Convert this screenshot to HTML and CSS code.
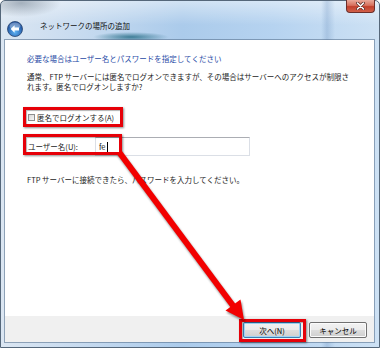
FILE: index.html
```html
<!DOCTYPE html>
<html lang="ja">
<head>
    <meta charset="UTF-8">
    <meta name="viewport" content="width=device-width, initial-scale=1.0">
    <title>ネットワークの場所の追加</title>
    <link rel="stylesheet" href="styles.css">
</head>
<body>
    <div class="window">
        <div class="titlebar">
            <span class="back">
                <svg width="16" height="16" viewBox="0 0 16 16">
                    <defs>
                        <radialGradient id="orb" cx="50%" cy="70%" r="60%">
                            <stop offset="0" stop-color="#5fb4f5"/>
                            <stop offset="1" stop-color="#1c4f9e"/>
                        </radialGradient>
                    </defs>
                    <circle cx="8" cy="8" r="7.5" fill="url(#orb)" stroke="#27446e" stroke-width="0.8"/>
                    <ellipse cx="8" cy="5" rx="5.5" ry="3.5" fill="#fff" opacity="0.35"/>
                    <path d="M3.6 8 L7.6 4.2 L7.6 6.6 L12 6.6 L12 9.4 L7.6 9.4 L7.6 11.8 Z" fill="#fff"/>
                </svg>
            </span>
            <span class="title">ネットワークの場所の追加</span>
            <span class="close">
                <svg width="9" height="8" viewBox="0 0 9 8">
                    <path d="M1.5 1 L7.5 7 M7.5 1 L1.5 7" stroke="#5a2a25" stroke-width="3" stroke-linecap="round"/>
                    <path d="M1.5 1 L7.5 7 M7.5 1 L1.5 7" stroke="#fff" stroke-width="1.6" stroke-linecap="round"/>
                </svg>
            </span>
        </div>
        <div class="client">
            <div class="panel">
                <div class="heading">必要な場合はユーザー名とパスワードを指定してください</div>
                <p class="desc">通常、FTP サーバーには匿名でログオンできますが、その場合はサーバーへのアクセスが制限さ<br>れます。匿名でログオンしますか?</p>
                <div class="check-row marked">
                    <span class="checkbox"></span>
                    <span>匿名でログオンする(A)</span>
                </div>
                <div class="user-row marked">
                    <span class="user-label">ユーザー名(U):</span>
                    <div class="textbox">fe<span class="caret"></span></div>
                </div>
                <p class="hint">FTP サーバーに接続できたら、パスワードを入力してください。</p>
            </div>
            <div class="footer">
                <span class="btn-wrap marked"><button class="btn default">次へ(N)</button></span>
                <button class="btn">キャンセル</button>
            </div>
        </div>
        <!-- annotation arrow drawn over the dialog -->
        <svg class="arrow" width="380" height="348" viewBox="0 0 380 348">
            <line x1="119" y1="152" x2="234" y2="307" stroke="#f20000" stroke-width="6"/>
            <polygon points="244,320 240.5,299.5 225.5,310.5" fill="#f20000"/>
        </svg>
    </div>
</body>
</html>
```

FILE: styles.css
```css
body {
    margin: 0;
    font-family: "Noto Sans CJK JP", "Noto Sans", sans-serif;
    font-size: 7.5px;
    color: #1a1a1a;
}
.window {
    position: relative;
    width: 380px;
    height: 348px;
    box-sizing: border-box;
    padding: 0 5px 5px 4px;
    border: 1px solid #55677a;
    border-radius: 5px 5px 0 0;
    background:
        radial-gradient(ellipse 38px 5px at 130px 36px, rgba(40, 110, 135, 0.85), rgba(40, 110, 135, 0)),
        radial-gradient(ellipse 40px 14px at 20px 2px, rgba(120, 135, 150, 0.6), rgba(120, 135, 150, 0)),
        linear-gradient(90deg, rgba(255, 255, 255, 0) 320px, rgba(90, 130, 180, 0.25) 326px, rgba(255, 255, 255, 0) 334px),
        linear-gradient(180deg, rgba(255, 255, 255, 0.45) 0, rgba(255, 255, 255, 0) 24px),
        linear-gradient(90deg, #dbe6f2 0%, #c6daef 22%, #abcbeb 48%, #b6d3f0 72%, #cde1f4 100%);
}
.titlebar {
    display: flex;
    align-items: flex-start;
    height: 39px;
}
.back {
    display: flex;
    margin: 20px 0 0 2px;
}
.title {
    margin: 20px 0 0 17px;
    line-height: 10px;
    color: #111;
}
.close {
    display: flex;
    align-items: center;
    justify-content: center;
    margin: -1px -1px 0 auto;
    width: 29px;
    height: 13px;
    box-sizing: border-box;
    border: 1px solid #6b2e2a;
    border-top: none;
    border-radius: 0 0 4px 4px;
    background: linear-gradient(180deg, #e9a99a 0%, #d7705d 45%, #c2402c 55%, #d1604a 100%);
}
.client {
    box-shadow: 0 0 0 1px rgba(80, 105, 135, 0.55);
}
.panel {
    height: 276px;
    box-sizing: border-box;
    padding: 14px 0 0 22px;
    background: #fff;
}
.heading {
    line-height: 10px;
    color: #1f4aa6;
}
.desc {
    margin: 8px 0 0;
    line-height: 10px;
}
.marked {
    position: relative;
}
.marked::after {
    content: "";
    position: absolute;
    box-sizing: border-box;
    border: 3px solid #e60008;
    box-shadow: 1px 1px 2px rgba(0, 0, 0, 0.45), inset 1px 1px 1px rgba(0, 0, 0, 0.3);
}
.check-row {
    display: inline-flex;
    align-items: center;
    height: 14px;
    margin-top: 18px;
    gap: 2px;
}
.check-row::after {
    top: -3px;
    bottom: -3px;
    left: -4px;
    right: -9px;
}
.checkbox {
    width: 7px;
    height: 7px;
    margin-left: 1px;
    box-sizing: border-box;
    border: 1px solid #8e8f8f;
    background: linear-gradient(135deg, #d8d8d8, #f6f6f6);
}
.user-row {
    display: flex;
    align-items: center;
    height: 19px;
    margin-top: 13px;
}
.user-row::after {
    top: -3px;
    left: -4px;
    width: 99px;
    height: 21px;
}
.user-label {
    width: 67px;
    padding-left: 1px;
}
.textbox {
    display: flex;
    align-items: center;
    width: 155px;
    height: 19px;
    box-sizing: border-box;
    padding-left: 3px;
    border: 1px solid #dbdfe6;
    border-top-color: #abadb3;
}
.caret {
    width: 1px;
    height: 10px;
    margin-left: 1px;
    background: #000;
}
.hint {
    margin: 19px 0 0;
    line-height: 10px;
}
.footer {
    display: flex;
    justify-content: flex-end;
    align-items: flex-start;
    gap: 8px;
    height: 26px;
    box-sizing: border-box;
    padding: 6px 7px 0 0;
    background: #f0f0f0;
}
.btn-wrap {
    display: flex;
}
.btn-wrap::after {
    top: -3px;
    bottom: -4px;
    left: -4px;
    right: -5px;
}
.btn {
    width: 58px;
    height: 16px;
    padding: 0;
    font-family: inherit;
    font-size: 7.5px;
    color: #000;
    border: 1px solid #707070;
    border-radius: 2px;
    background: linear-gradient(180deg, #f2f2f2 0%, #ebebeb 48%, #dddddd 52%, #cfcfcf 100%);
    box-shadow: inset 0 0 0 1px #fbfbfb;
}
.btn.default {
    border-color: #3c7fb1;
    box-shadow: inset 0 0 0 1px #9fd5f6;
}
.arrow {
    position: absolute;
    top: -1px;
    left: -1px;
    pointer-events: none;
    filter: drop-shadow(1px 2px 1px rgba(0, 0, 0, 0.45));
}
```
